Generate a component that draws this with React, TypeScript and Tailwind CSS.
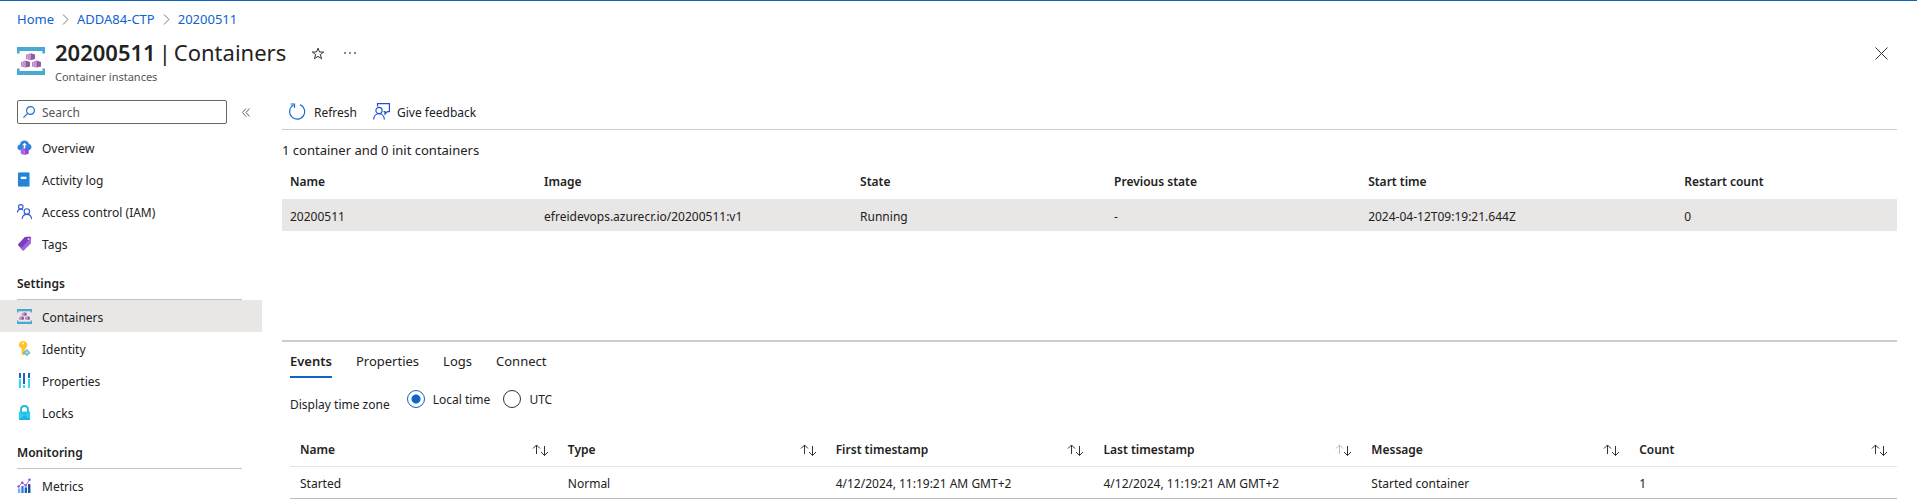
import React from "react";

const Svg = ({
  size = 16,
  box = 16,
  stroke,
  children,
}: {
  size?: number;
  box?: number;
  stroke?: string;
  children: React.ReactNode;
}) => (
  <svg
    width={size}
    height={size}
    viewBox={`0 0 ${box} ${box}`}
    fill="none"
    stroke={stroke}
    strokeWidth={stroke ? 1.2 : undefined}
    aria-hidden="true"
    className="shrink-0"
  >
    {children}
  </svg>
);

const Cube = ({ x, y }: { x: number; y: number }) => (
  <g transform={`translate(${x} ${y})`}>
    <path d="M0 1.6 4.6 0v7L0 5.8z" fill="#b77fc4" />
    <path d="M4.6 0 9 1.4v4.4L4.6 7z" fill="#9059a0" />
    <path d="M1.5 1.6v4.2M3.1 1.1v5" stroke="#dcb9e2" strokeWidth=".7" />
  </g>
);

const ContainerIcon = ({ size }: { size: number }) => (
  <Svg size={size} box={28}>
    <path d="M0 0h28v6.5h-2.6V4H2.600v2.500H0z" fill="#48a9d4" />
    <path d="M0 28h28v-6.500h-2.600V24H2.600v-2.500H0z" fill="#48a9d4" />
    <Cube x={9} y={6.2} />
    <Cube x={4} y={13.6} />
    <Cube x={15} y={13.6} />
  </Svg>
);

const OverviewIcon = () => (
  <Svg size={15}>
    <path d="M4 11C1.700 11 .5 9.500.5 7.700c0-1.600 1.100-2.800 2.600-3C3.500 2.200 5.500.5 8 .5c2.400 0 4.200 1.500 4.800 3.800 1.700.2 2.700 1.500 2.700 3.200 0 1.900-1.400 3.500-3.500 3.500z" fill="#2b86dc" />
    <path d="M4 8.800 8 8v8l-4-1.300z" fill="#a566e8" />
    <path d="M8 8l4.500.800v5.900L8 16z" fill="#8a4bd6" />
    <path d="M8 3 5.500 5.700h1.700V9h1.600V5.700h1.700z" fill="#fff" />
  </Svg>
);

const ActivityIcon = () => (
  <Svg size={15}>
    <path d="M2.500.500h11.500v15H2.500z" fill="#9ad0f0" />
    <rect x="1" y=".5" width="12" height="15" rx="1" fill="#2485d8" />
    <rect x="4" y="5" width="6" height="2.500" fill="#fff" />
  </Svg>
);

const AccessIcon = () => (
  <Svg size={15} stroke="#2f5bd7">
    <circle cx="4" cy="3" r="2.400" />
    <path d="M.500 9c.2-2 1.500-3.500 3.500-3.500 1 0 1.800.4 2.400 1" />
    <circle cx="10.500" cy="8" r="2.900" />
    <path d="M5.500 16c.2-3 2.200-5 5-5s4.800 2 5 5" />
  </Svg>
);

const TagIcon = () => (
  <Svg size={15}>
    <path d="M8.500 1 14 .8l1 .8-.2 6.400-7.600 7.400c-.4.400-.9.400-1.300 0L1.300 10c-.4-.4-.4-.9 0-1.300z" fill="#a064d4" />
    <path d="M8.500 1 14 .8l1 .8L5 12.500 1.300 9.500c-.2-.3-.2-.6 0-.8z" fill="#7d3cc4" />
    <circle cx="12.300" cy="3.300" r="1" fill="#f3e8fb" />
  </Svg>
);

const IdentityIcon = () => (
  <Svg size={15}>
    <path d="M6.500 0C9 0 11 1.900 11 4.300c0 1.500-.8 2.700-2 3.500V9L7.800 10l1.200 1-1.200 1.200L9 13.500 6.700 15.500 5 14V7.900C3.300 7.200 2 6 2 4.300 2 1.900 4 0 6.500 0z" fill="#fcc624" />
    <circle cx="6.500" cy="2.600" r="1.200" fill="#fff3c4" />
    <path d="m10.500 9 3.500 3.400-3.500 3.400L7 12.400z" fill="#6fc0de" stroke="#3f98bd" strokeWidth=".6" />
    <path d="M8.800 12.400h3.400M10.500 10.700v3.400" stroke="#d4f1fa" strokeWidth=".6" />
  </Svg>
);

const PropertiesIcon = () => (
  <Svg size={15} box={15}>
    <path d="M2 0h2v5H2zM6 0h2v11H6zM11 0h2v5h-2z" fill="#1666c8" />
    <path d="M2 6h2v9H2zM6 12h2v3H6zM11 6h2v9h-2z" fill="#38d4f3" />
  </Svg>
);

const LockIcon = () => (
  <Svg size={15}>
    <path d="M4.300 8V4.800C4.300 2.600 5.900 1 8 1s3.700 1.600 3.700 3.800V8" stroke="#22b8dc" strokeWidth="2" />
    <rect x="2" y="7" width="12" height="9" rx=".8" fill="#2fd0ee" />
    <path d="M2 15.500 8 11l6 4.500-.5.500h-11z" fill="#1eb3da" />
    <path d="M2 7.500 8 12l6-4.500z" fill="#29c3e6" />
  </Svg>
);

const MetricsIcon = () => (
  <Svg size={15}>
    <path d="M1 11h2.500v5H1z" fill="#6eb4f7" />
    <path d="M4.600 8.500h2.500V16H4.600z" fill="#2b7de0" />
    <path d="M8.200 10h2.500v6H8.200z" fill="#1b5cb8" />
    <path d="M11.800 6.500h2.500V16h-2.500z" fill="#134a94" />
    <path d="m1.500 9.500 4-4.500 3.800 3L13.300 2" stroke="#a35de8" strokeWidth="1" />
    <circle cx="1.700" cy="9" r="1.300" fill="#9a4de6" />
    <circle cx="5.500" cy="5" r="1.400" fill="#9a4de6" />
    <circle cx="9.300" cy="8" r="1.300" fill="#9a4de6" />
    <circle cx="13.300" cy="1.800" r="1.400" fill="#9a4de6" />
  </Svg>
);

const SearchIcon = () => (
  <Svg size={12} box={12} stroke="#1a6dd0">
    <circle cx="7.500" cy="4.500" r="3.900" />
    <path d="M4.700 7.300.400 11.600" />
  </Svg>
);

const RefreshIcon = () => (
  <Svg size={17} box={17} stroke="#1a6dd0">
    <path d="M11 1.600a7.500 7.500 0 1 1-6.500.4" />
    <path d="M1.500 1h4v4" />
  </Svg>
);

const FeedbackIcon = () => (
  <Svg size={17} box={17} stroke="#2450d8">
    <path d="M4.500 3.500V.600h11.900v8h-2L12 11V8.600h-1.500" />
    <circle cx="6" cy="7.500" r="3.100" />
    <path d="M.600 16.500c.2-3.300 2.400-5.900 5.400-5.900s5.200 2.600 5.400 5.900" />
  </Svg>
);

const Chevron = () => (
  <svg width="7" height="11" viewBox="0 0 7 11" fill="none" stroke="#777" aria-hidden="true">
    <path d="M1 .500 6 5.500 1 10.500" />
  </svg>
);

const SortIcon = ({ faded }: { faded?: boolean }) => (
  <svg width="17" height="12" viewBox="0 0 17 12" fill="none" stroke="#333" aria-hidden="true">
    <path d="M4.500 10V1M1 4.500 4.500 1 8 4.500" className={faded ? "stroke-[#bbb]" : "stroke-[#333]"} />
    <path d="M12.500 2v9.500M9 8l3.500 3.500L16 8" />
  </svg>
);

type Item = { label: string; icon: React.ReactNode; active?: boolean };

const general: Item[] = [
  { label: "Overview", icon: <OverviewIcon /> },
  { label: "Activity log", icon: <ActivityIcon /> },
  { label: "Access control (IAM)", icon: <AccessIcon /> },
  { label: "Tags", icon: <TagIcon /> },
];
const settings: Item[] = [
  { label: "Containers", icon: <ContainerIcon size={15} />, active: true },
  { label: "Identity", icon: <IdentityIcon /> },
  { label: "Properties", icon: <PropertiesIcon /> },
  { label: "Locks", icon: <LockIcon /> },
];
const monitoring: Item[] = [{ label: "Metrics", icon: <MetricsIcon /> }];

const Menu = ({ items }: { items: Item[] }) => (
  <ul>
    {items.map((i) => (
      <li key={i.label}>
        <a
          href="#"
          aria-current={i.active ? "page" : undefined}
          className={`flex h-8 items-center pl-[17px] ${i.active ? "bg-[#e8e7e6]" : ""}`}
        >
          <span className="flex w-[25px] items-center">{i.icon}</span>
          <span className="pt-1">{i.label}</span>
        </a>
      </li>
    ))}
  </ul>
);

const MenuHeading = ({ children }: { children: React.ReactNode }) => (
  <h2 className="mr-5 ml-[17px] flex h-[41px] items-end border-b border-[#c4c4c4] pb-[7px] font-semibold">{children}</h2>
);

const containerColumns = [
  { title: "Name", value: "20200511", width: "w-[15.73%]" },
  { title: "Image", value: "efreidevops.azurecr.io/20200511:v1", width: "w-[19.57%]" },
  { title: "State", value: "Running", width: "w-[15.73%]" },
  { title: "Previous state", value: "-", width: "w-[15.73%]" },
  { title: "Start time", value: "2024-04-12T09:19:21.644Z", width: "w-[19.57%]" },
  { title: "Restart count", value: "0", width: "w-[13.67%]" },
];

const eventColumns = [
  { title: "Name", value: "Started" },
  { title: "Type", value: "Normal" },
  { title: "First timestamp", value: "4/12/2024, 11:19:21 AM GMT+2" },
  { title: "Last timestamp", value: "4/12/2024, 11:19:21 AM GMT+2", faded: true },
  { title: "Message", value: "Started container" },
  { title: "Count", value: "1" },
];

const radioClass =
  "size-[18px] appearance-none rounded-full border border-[#333] bg-white checked:border-[#0f62cf] checked:bg-[radial-gradient(circle,#0f62cf_4px,white_5px)]";

export default function App() {
  return (
    <div className="h-screen overflow-hidden border-t border-[#0f62bd] bg-white font-['Noto_Sans','Open_Sans',sans-serif] text-[12px] leading-4 text-[#222]">
      <nav aria-label="Breadcrumb" className="flex h-9 items-center gap-2 pl-[17px] text-[13px] text-[#0f62cf]">
        <a href="#">Home</a>
        <Chevron />
        <a href="#">ADDA84-CTP</a>
        <Chevron />
        <a href="#">20200511</a>
      </nav>

      <header className="flex h-[54px] items-start pr-[29px] pl-[17px]">
        <div className="mt-[10px] mr-[10px]">
          <ContainerIcon size={28} />
        </div>
        <div>
          <h1 className="flex gap-[3px] text-[22px] leading-[30px]">
            <span className="font-semibold">20200511</span>
            <span>|</span>
            <span>Containers</span>
          </h1>
          <p className="pt-[2px] text-[11px] text-[#555]">Container instances</p>
        </div>
        <button type="button" aria-label="Add to favorites" className="mt-[10px] ml-[25px]">
          <svg width="14" height="13" viewBox="0 0 14 13" fill="none" stroke="#333" aria-hidden="true">
            <path d="M7 1.200 8.500 5h4.200L9.300 7.600l1.300 4.200L7 9.300l-3.600 2.500 1.300-4.200L1.300 5h4.200z" />
          </svg>
        </button>
        <button type="button" aria-label="More actions" className="mt-[15px] ml-[19px]">
          <svg width="12" height="2" viewBox="0 0 12 2" fill="#888" aria-hidden="true">
            <path d="M0 0h2v2H0zM5 0h2v2H5zM10 0h2v2h-2z" />
          </svg>
        </button>
        <button type="button" aria-label="Close" className="mt-[10px] ml-auto">
          <svg width="13" height="13" viewBox="0 0 13 13" fill="none" stroke="#333" aria-hidden="true">
            <path d="m.5.5 12 12M12.500.5l-12 12" />
          </svg>
        </button>
      </header>

      <div className="flex">
        <aside className="w-[262px] shrink-0">
          <div className="flex h-10 items-start pt-[9px] pl-[17px]">
            <label className="flex h-6 w-[210px] items-center gap-[7px] rounded-[2px] border border-[#666] pl-[5px]">
              <SearchIcon />
              <input
                type="text"
                aria-label="Search"
                placeholder="Search"
                className="min-w-0 flex-1 pt-[2px] outline-none placeholder:text-[#555]"
              />
            </label>
            <button type="button" aria-label="Collapse menu" className="ml-[15px] flex h-6 items-center">
              <svg width="8" height="9" viewBox="0 0 8 9" fill="none" stroke="#666" aria-hidden="true">
                <path d="M4 .500.500 4.500 4 8.500M7.500.500 4 4.500l3.500 4" />
              </svg>
            </button>
          </div>
          <Menu items={general} />
          <MenuHeading>Settings</MenuHeading>
          <Menu items={settings} />
          <MenuHeading>Monitoring</MenuHeading>
          <Menu items={monitoring} />
        </aside>

        <main className="mr-5 ml-5 min-w-0 flex-1">
          <div className="flex h-[39px] items-center gap-4 border-b border-[#ccc] pt-[2px] pl-[7px]">
            <button type="button" className="flex items-center gap-2">
              <RefreshIcon />
              <span className="pt-[3px]">Refresh</span>
            </button>
            <button type="button" className="flex items-center gap-[7px]">
              <FeedbackIcon />
              <span className="pt-[3px]">Give feedback</span>
            </button>
          </div>
          <p className="pt-3 text-[13px] leading-4">1 container and 0 init containers</p>
          <table className="mt-1 w-full table-fixed border-collapse text-left">
            <thead>
              <tr className="h-[37px]">
                {containerColumns.map((c) => (
                  <th key={c.title} scope="col" className={`pt-[2px] pl-2 font-semibold ${c.width}`}>
                    {c.title}
                  </th>
                ))}
              </tr>
            </thead>
            <tbody>
              <tr className="h-8 bg-[#e8e7e6]">
                {containerColumns.map((c) => (
                  <td key={c.title} className="pt-1 pl-2">
                    {c.value}
                  </td>
                ))}
              </tr>
            </tbody>
          </table>

          <section className="mt-[109px] border-t-2 border-[#ccc] pl-2">
            <div role="tablist" className="flex gap-6 pt-[11px] text-[13px] leading-4">
              <button type="button" role="tab" aria-selected="true" className="border-b-2 border-[#0f62cf] pb-[7px] font-semibold">
                Events
              </button>
              {["Properties", "Logs", "Connect"].map((t) => (
                <button key={t} type="button" role="tab" aria-selected="false" className="border-b-2 border-transparent pb-[7px]">
                  {t}
                </button>
              ))}
            </div>
            <div role="radiogroup" aria-labelledby="zone-label" className="flex items-start pt-3">
              <span id="zone-label" className="mr-[17px] pt-[7px]">
                Display time zone
              </span>
              <label className="mr-[13px] flex items-center gap-2">
                <input type="radio" name="zone" defaultChecked className={radioClass} />
                <span className="pt-[2px]">Local time</span>
              </label>
              <label className="flex items-center gap-2">
                <input type="radio" name="zone" className={radioClass} />
                <span className="pt-[2px]">UTC</span>
              </label>
            </div>
            <table className="mt-[19px] w-full table-fixed border-collapse text-left">
              <thead>
                <tr className="h-[34px] border-b border-[#e3e3e3]">
                  {eventColumns.map((c) => (
                    <th key={c.title} scope="col" className="pt-[2px] pr-[9px] pl-[10px] font-semibold">
                      <button type="button" className="flex w-full items-center justify-between">
                        {c.title}
                        <SortIcon faded={c.faded} />
                      </button>
                    </th>
                  ))}
                </tr>
              </thead>
              <tbody>
                <tr className="h-8 border-b border-[#bbb]">
                  {eventColumns.map((c) => (
                    <td key={c.title} className="pt-[3px] pl-[10px]">
                      {c.value}
                    </td>
                  ))}
                </tr>
              </tbody>
            </table>
          </section>
        </main>
      </div>
    </div>
  );
}
